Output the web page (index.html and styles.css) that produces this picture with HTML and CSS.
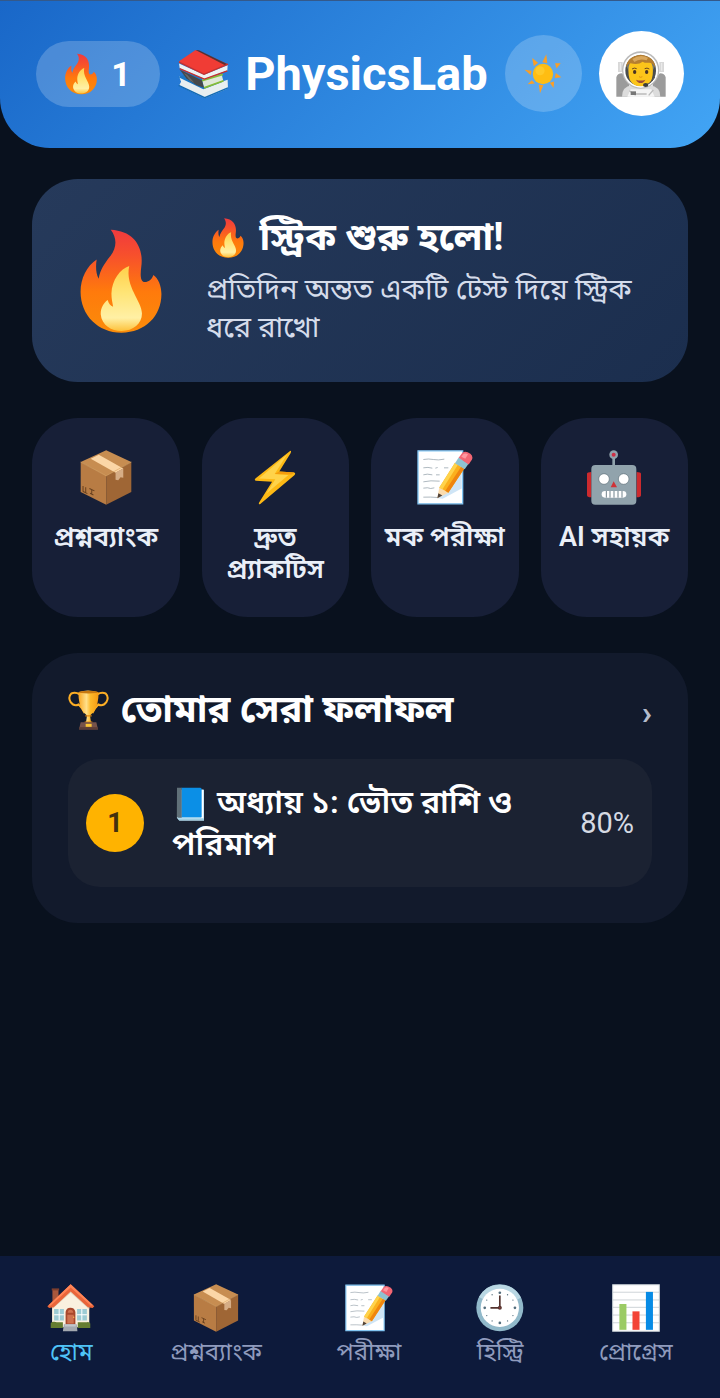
FILE: index.html
```
<!DOCTYPE html>
<html lang="bn">
<head>
    <meta charset="UTF-8">
    <meta name="viewport" content="width=device-width, initial-scale=1.0">
    <title>PhysicsLab</title>
    <link rel="stylesheet" href="styles.css">
</head>
<body>

<!-- Icon definitions -->
<svg class="sprite" aria-hidden="true">
    <defs>
        <linearGradient id="flame" x1="0" y1="0" x2="0" y2="1">
            <stop offset="0" stop-color="#f03a3e"/>
            <stop offset="0.25" stop-color="#f7502c"/>
            <stop offset="0.6" stop-color="#ff7a0c"/>
            <stop offset="1" stop-color="#fb8c0a"/>
        </linearGradient>
        <linearGradient id="flame-core" x1="0" y1="0" x2="0" y2="1">
            <stop offset="0" stop-color="#ffcf4a"/>
            <stop offset="0.4" stop-color="#ffe475"/>
            <stop offset="0.8" stop-color="#fff0a5"/>
            <stop offset="1" stop-color="#fdc23c"/>
        </linearGradient>
        <linearGradient id="gold" x1="0" y1="0" x2="1" y2="0">
            <stop offset="0" stop-color="#f9a51f"/>
            <stop offset="0.4" stop-color="#ffe08a"/>
            <stop offset="0.6" stop-color="#fdb92a"/>
            <stop offset="1" stop-color="#f59a12"/>
        </linearGradient>
    </defs>

    <symbol id="fire" viewBox="152 158 243 310">
        <path fill="url(#flame)" d="M243 160C262 185 262 213 240 241C224 262 211 280 207 306C198 290 198 268 201 249C172 268 153 305 153 345C153 415 205 467 275 467C345 467 394 418 394 352C394 328 385 305 370 295C366 308 355 316 345 316C330 316 331 293 334 270C341 218 318 164 243 160Z"/>
        <path fill="url(#flame-core)" d="M298 268C272 276 246 310 245 350C245 366 248 376 250 390C242 388 236 380 234 370C222 378 213 393 213 412C216 445 245 462 275 462C310 462 336 440 336 410C336 372 285 330 298 268Z"/>
    </symbol>

    <symbol id="books" viewBox="532 148 154 146">
        <path fill="#e8eef0" d="M538 228L612 262L682 238L683 264L614 293L538 256L544 244Z"/>
        <path fill="#1976c5" d="M535 230L610 266L668 244L640 226L560 222Z"/>
        <path fill="none" stroke="#126ab4" stroke-width="4" d="M537 255L614 291L683 262"/>
        <path fill="#dfe8d8" d="M606 238L664 222L669 240L612 262Z"/>
        <path fill="none" stroke="#86bd36" stroke-width="5" d="M668 222L606 241M670 241L612 262"/>
        <path fill="#46494b" d="M540 208L606 240L612 262L590 254L560 234Z"/>
        <path fill="#66696a" d="M552 218L562 223L584 248L570 240Z"/>
        <path fill="#f03c35" d="M537 184L587 150L683 192L612 222Z"/>
        <path fill="#5a3031" d="M587 150L597 151L682 192L676 196Z"/>
        <path fill="#eef2f2" d="M538 190L612 223L682 195L681 211L613 236L540 204Z"/>
        <path fill="none" stroke="#c9302c" stroke-width="4" d="M538 186L612 222L683 192M540 205L613 236L681 212"/>
    </symbol>

    <symbol id="sun" viewBox="489 156 114 122">
        <g fill="#fb9f26">
            <path d="M556 157L559 184L544 181Z"/>
            <path d="M583 184L600 184L587 200Z"/>
            <path d="M585 214L602 227L582 229Z"/>
            <path d="M567 244L580 240L578 260Z"/>
            <path d="M533 249L547 251L537 276Z"/>
            <path d="M512 236L521 246L499 248Z"/>
            <path d="M490 204L511 207L508 220Z"/>
            <path d="M513 168L531 183L518 193Z"/>
        </g>
        <circle cx="546" cy="217" r="31" fill="#ffbd12"/>
        <circle cx="537" cy="207" r="14" fill="#ffc928"/>
    </symbol>

    <symbol id="astronaut" viewBox="78 70 150 141">
        <path fill="#9b9b9b" d="M79 152Q82 140 96 140L118 160V210H79ZM227 152Q224 140 210 140L188 160V210H227Z"/>
        <path fill="#d8d8d8" d="M84 106H98V136H84ZM208 106H222V136H208Z"/>
        <path fill="none" stroke="#eee" stroke-width="3" d="M91 109V132M215 109V132"/>
        <path fill="#dcdcdc" d="M96 210Q96 180 125 176H180Q211 180 211 210Z"/>
        <path fill="#f5f5f5" d="M112 210L122 188H184L194 210Z"/>
        <path fill="none" stroke="#bbb" stroke-width="4" d="M118 192L137 206M190 190L176 206M138 202H170"/>
        <path fill="#777" d="M122 194H138V205H122Z"/>
        <circle cx="152" cy="130" r="56" fill="#b9b9b9"/>
        <circle cx="152" cy="131" r="52" fill="#fff"/>
        <circle cx="152" cy="132" r="46" fill="#4a4d4d"/>
        <path fill="#6f7470" d="M109 118Q116 90 152 86Q190 90 196 118L180 146H122Z"/>
        <path fill="#fcc51a" d="M116 120Q118 96 152 96Q186 96 188 120Q194 178 152 179Q110 178 116 120Z"/>
        <path fill="#b57e30" d="M108 122Q111 89 152 84Q193 89 196 122Q188 108 178 108Q166 110 158 105Q145 116 122 110Q112 112 108 122Z"/>
        <path fill="#d9a75c" d="M127 97Q150 82 174 93L170 101Q148 94 133 106Z"/>
        <ellipse cx="134" cy="136" rx="5" ry="6" fill="#4a3424"/>
        <ellipse cx="170" cy="136" rx="5" ry="6" fill="#4a3424"/>
        <path fill="none" stroke="#6a471f" stroke-width="3" d="M126 127Q133 122 140 126M164 126Q171 122 178 127"/>
        <path fill="none" stroke="#df9413" stroke-width="3" d="M147 150Q152 154 157 150"/>
        <path fill="#a04c37" d="M138 159Q152 164 166 159Q161 169 152 169Q143 169 138 159Z"/>
        <path fill="none" stroke="#555" stroke-width="3" d="M194 151Q188 167 168 175"/>
        <ellipse cx="167" cy="175" rx="8" ry="6" fill="#3c3c3c"/>
    </symbol>

    <symbol id="box" viewBox="163 119 153 164">
        <path fill="#c78d51" d="M164 155L240 120L315 155L240 197Z"/>
        <path fill="#b87c44" d="M164 155L240 196V282L164 244Z"/>
        <path fill="#9f6635" d="M240 196L315 155V244L240 282Z"/>
        <path fill="#fbd6a6" d="M194 145L218 133L291 174L268 187Z"/>
        <path fill="#d6ad86" d="M268 186L291 174V202L283 200L276 209L268 208Z"/>
        <path fill="none" stroke="#d9a668" stroke-width="2" d="M164 155L240 196L315 155"/>
        <path fill="none" stroke="#67401f" stroke-width="3" d="M171 226V241M179 230V245M170 242L184 249M190 234L205 241M197 237V252M192 248L202 253"/>
    </symbol>

    <symbol id="bolt" viewBox="685 118 128 168">
        <path fill="#fdb915" d="M795 121Q800 119 797 127L762 184L808 187Q813 189 809 194L704 283Q698 286 700 279L740 215L690 212Q685 210 689 205Z"/>
        <path fill="#ffd34a" d="M786 132L700 205L750 207L722 252L790 194L748 191Z"/>
        <path fill="#f49c0d" d="M748 191L762 184L808 187L800 193Z"/>
    </symbol>

    <symbol id="memo" viewBox="170 120 168 164">
        <path fill="#fff" stroke="#82c5f2" stroke-width="4" d="M173 122H307V281H173Z"/>
        <path fill="#cfe5f6" d="M304 188V235L247 266L232 264Z"/>
        <path fill="none" stroke="#8796a0" stroke-width="2" d="M189 148Q205 145 219 148T252 147M189 173Q203 170 216 174M225 174L232 172M251 173H264M189 194L201 192L216 194M227 194H238M189 215Q210 210 238 213M189 234Q203 231 211 235L222 233M189 261Q211 260 232 262"/>
        <path fill="#fbdcae" d="M231 264L237 231L264 248Z"/>
        <path fill="#514238" d="M231 264L234 249L246 256Z"/>
        <path fill="#fbb01d" d="M237 232L284 158L312 175L264 248Z"/>
        <path fill="#ffd34b" d="M237 232L284 158L293 163L246 238Z"/>
        <path fill="#ef850f" d="M255 242L303 169L312 175L264 248Z"/>
        <path fill="#8fc2d1" d="M284 159L295 142L325 160L313 177Z"/>
        <path fill="#f36673" d="M295 143L306 128Q316 121 330 131Q339 138 335 148L325 163Z"/>
        <path fill="#ff97a0" d="M303 140L310 131Q316 128 323 132L315 146Z"/>
    </symbol>

    <symbol id="robot" viewBox="683 119 164 165">
        <path fill="#91a3ac" d="M760 143H768V166H760Z"/>
        <circle cx="764" cy="133" r="13" fill="#91a3ac"/>
        <circle cx="764" cy="133" r="6" fill="#cf3045"/>
        <path fill="#cc2a2e" d="M684 190Q684 185 697 185V261Q684 261 684 255ZM846 190Q846 185 833 185V261Q846 261 846 255Z"/>
        <rect x="697" y="164" width="135" height="119" rx="12" fill="#91a3ac"/>
        <circle cx="735" cy="206" r="16" fill="#fff" stroke="#5f717a" stroke-width="2"/>
        <circle cx="794" cy="206" r="16" fill="#fff" stroke="#5f717a" stroke-width="2"/>
        <path fill="#cf3237" d="M764 213L774 231H755Z"/>
        <rect x="728" y="242" width="74" height="20" rx="10" fill="#fff"/>
        <path stroke="#71838c" stroke-width="3" d="M742 242V262M753 242V262M765 242V262M777 242V262M789 242V262"/>
    </symbol>

    <symbol id="trophy" viewBox="131 134 123 119">
        <path fill="none" stroke="#fcae25" stroke-width="6" d="M166 147Q154 139 141 144Q130 155 139 170Q149 184 163 177Q173 186 181 203M219 147Q231 139 244 144Q255 155 246 170Q236 184 222 177Q212 186 204 203"/>
        <path fill="url(#gold)" d="M162 140Q190 130 223 140Q222 180 210 196Q202 206 197 210L200 231H185L188 210Q181 205 174 195Q163 178 162 140Z"/>
        <ellipse cx="192" cy="140" rx="29" ry="4" fill="#c77810"/>
        <path fill="none" stroke="#e08611" stroke-width="4" d="M183 211H202M181 230H204"/>
        <path fill="#76534a" d="M169 230H216L221 252H164Z"/>
        <path fill="#5b3d37" d="M164 245H221V252H164Z"/>
        <path fill="#fbc635" d="M184 235H202V244H184Z"/>
    </symbol>

    <symbol id="book" viewBox="454 414 85 102">
        <path fill="#424b50" d="M456 418H470V512H460L455 505Z"/>
        <path fill="#b7dff2" d="M468 422H537V515H463L456 507Z"/>
        <path fill="#fff" d="M528 422H535V507H528Z"/>
        <path fill="#0b8fe6" d="M469 416H526Q530 416 530 421V505H469Z"/>
        <path fill="#607078" d="M456 416H470V506H460Q456 506 456 502Z"/>
        <path fill="none" stroke="#8bbcd2" stroke-width="2" d="M460 511H537"/>
    </symbol>

    <symbol id="house" viewBox="145 121 142 142">
        <path fill="#a8573c" d="M161 136H179V164L161 178Z"/>
        <path fill="#7d3e2d" d="M159 134H181V140H159Z"/>
        <path fill="#faf1df" d="M215 139L270 189V249H160V189Z"/>
        <path fill="#e0d0b7" d="M215 138L270 187V196L215 147L160 196V187Z"/>
        <path fill="#e9653a" d="M215 122L285 187L280 192L266 190L215 143L165 190L151 192L146 187Z"/>
        <path fill="#ff8557" d="M215 122L281 184L275 185L215 131L155 185L150 184Z"/>
        <path fill="#9ccbd4" d="M166 195H195V229H166ZM234 195H263V229H234Z"/>
        <path stroke="#fff" stroke-width="3" d="M181 195V229M166 212H195M248 195V229M234 212H263"/>
        <path fill="#a9482c" d="M200 243V204Q202 191 214 191Q227 191 229 204V243Z"/>
        <path fill="#cf7250" d="M205 212H224V238H205ZM206 206Q207 197 214 197Q222 197 223 206Z"/>
        <circle cx="224" cy="219" r="2" fill="#ffce57"/>
        <path fill="#657d31" d="M156 237Q160 231 174 234H192V251H156ZM236 234H263Q270 232 273 238V251H236Z"/>
        <path fill="#a4a9b0" d="M195 240H233L235 261H192Z"/>
        <path fill="#c3c7cb" d="M198 240H230V247H197Z"/>
    </symbol>

    <symbol id="clock" viewBox="350 131 143 143">
        <circle cx="421" cy="202" r="70" fill="#91b9ca"/>
        <path fill="#b9d7e3" d="M359 170Q380 132 421 133Q465 134 484 171L473 178Q454 147 421 146Q389 147 370 176Z"/>
        <circle cx="421" cy="202" r="57" fill="#fff"/>
        <g fill="#536d7c">
            <circle cx="421" cy="157" r="4"/>
            <circle cx="466" cy="202" r="4"/>
            <circle cx="421" cy="247" r="4"/>
            <circle cx="376" cy="202" r="4"/>
            <circle cx="444" cy="163" r="2"/>
            <circle cx="460" cy="179" r="2"/>
            <circle cx="460" cy="225" r="2"/>
            <circle cx="444" cy="241" r="2"/>
            <circle cx="398" cy="241" r="2"/>
            <circle cx="382" cy="225" r="2"/>
            <circle cx="382" cy="179" r="2"/>
            <circle cx="398" cy="163" r="2"/>
        </g>
        <path fill="none" stroke="#54342f" stroke-width="5" d="M421 165V202H393"/>
        <circle cx="421" cy="202" r="6" fill="#54342f"/>
        <circle cx="421" cy="202" r="2" fill="#c63c3c"/>
    </symbol>

    <symbol id="chart" viewBox="758 131 143 142">
        <path fill="#fff" stroke="#cbd3d8" stroke-width="3" d="M760 133H899V271H760Z"/>
        <path stroke="#b5bfc5" stroke-width="2" d="M760 155H899M760 178H899M760 200H899M760 223H899M760 246H899"/>
        <path fill="#9bcb64" d="M780 190H801V267H780Z"/>
        <path fill="#f34336" d="M819 212H840V267H819Z"/>
        <path fill="#078be5" d="M859 154H880V267H859Z"/>
    </symbol>
</svg>

<header class="topbar">
    <div class="streak-pill">
        <svg class="pill-icon"><use href="#fire"/></svg>
        <span>1</span>
    </div>
    <h1 class="brand">
        <svg class="brand-icon"><use href="#books"/></svg>
        <span>PhysicsLab</span>
    </h1>
    <button class="theme-btn" type="button" aria-label="থিম">
        <svg class="sun-icon"><use href="#sun"/></svg>
    </button>
    <button class="avatar" type="button" aria-label="প্রোফাইল">
        <svg class="avatar-icon"><use href="#astronaut"/></svg>
    </button>
</header>

<main>
    <section class="streak-card">
        <svg class="streak-icon"><use href="#fire"/></svg>
        <div class="streak-text">
            <h2><svg class="title-fire"><use href="#fire"/></svg> স্ট্রিক শুরু হলো!</h2>
            <p>প্রতিদিন অন্তত একটি টেস্ট দিয়ে স্ট্রিক ধরে রাখো</p>
        </div>
    </section>

    <div class="actions">
        <a class="action" href="#bank">
            <svg><use href="#box"/></svg>
            <span>প্রশ্নব্যাংক</span>
        </a>
        <a class="action" href="#practice">
            <svg><use href="#bolt"/></svg>
            <span>দ্রুত প্র্যাকটিস</span>
        </a>
        <a class="action" href="#mock">
            <svg><use href="#memo"/></svg>
            <span>মক পরীক্ষা</span>
        </a>
        <a class="action" href="#ai">
            <svg><use href="#robot"/></svg>
            <span>AI সহায়ক</span>
        </a>
    </div>

    <section class="results">
        <div class="results-head">
            <h2><svg class="title-trophy"><use href="#trophy"/></svg> তোমার সেরা ফলাফল</h2>
            <a class="more" href="#results">›</a>
        </div>
        <div class="result">
            <span class="rank">1</span>
            <h3><svg class="title-book"><use href="#book"/></svg> অধ্যায় ১: ভৌত রাশি ও পরিমাপ</h3>
            <span class="score">80%</span>
        </div>
    </section>
</main>

<nav class="bottom-nav">
    <a class="active" href="#home"><svg><use href="#house"/></svg>হোম</a>
    <a href="#bank"><svg><use href="#box"/></svg>প্রশ্নব্যাংক</a>
    <a href="#exam"><svg><use href="#memo"/></svg>পরীক্ষা</a>
    <a href="#history"><svg><use href="#clock"/></svg>হিস্ট্রি</a>
    <a href="#progress"><svg><use href="#chart"/></svg>প্রোগ্রেস</a>
</nav>

</body>
</html>
```
FILE: styles.css
```
* {
    box-sizing: border-box;
}
body {
    margin: 0;
    min-height: 100vh;
    display: flex;
    flex-direction: column;
    font-family: Roboto, "Noto Sans Bengali", "Noto Sans", sans-serif;
    color: #fff;
    background-color: #09111e;
}
h1, h2, h3, p {
    margin: 0;
}
a {
    color: inherit;
    text-decoration: none;
}
button {
    border: none;
    padding: 0;
    cursor: pointer;
}
.sprite {
    position: absolute;
    width: 0;
    height: 0;
}

/* Header */
.topbar {
    display: flex;
    align-items: center;
    justify-content: space-between;
    padding: 30px 36px 32px;
    border-top: 1px solid #34598a;
    border-radius: 0 0 50px 50px;
    background: linear-gradient(135deg, #1967c8, #42a5f5);
}
.streak-pill {
    display: flex;
    align-items: center;
    justify-content: center;
    gap: 14px;
    width: 124px;
    height: 66px;
    border-radius: 33px;
    background-color: rgba(255, 255, 255, 0.2);
    font-size: 34px;
    font-weight: bold;
}
.pill-icon {
    width: 32px;
    height: 42px;
}
.brand {
    display: flex;
    align-items: center;
    gap: 16px;
    font-size: 47px;
    line-height: 54px;
}
.brand-icon {
    width: 52px;
    height: 50px;
}
.theme-btn, .avatar {
    display: flex;
    align-items: center;
    justify-content: center;
    border-radius: 50%;
}
.theme-btn {
    width: 77px;
    height: 77px;
    background-color: rgba(255, 255, 255, 0.2);
}
.sun-icon {
    width: 38px;
    height: 40px;
}
.avatar {
    width: 85px;
    height: 85px;
    background-color: #fff;
}
.avatar-icon {
    width: 50px;
    height: 47px;
}

main {
    display: flex;
    flex-direction: column;
    gap: 36px;
    padding: 31px 32px;
}

/* Streak card */
.streak-card {
    display: flex;
    align-items: center;
    gap: 44px;
    padding: 36px 48px;
    border-radius: 46px;
    background: linear-gradient(135deg, #263a5b, #1b2e4e);
}
.streak-icon {
    flex: none;
    width: 82px;
    height: 104px;
}
.streak-text h2 {
    margin-bottom: 11px;
    font-size: 38px;
    line-height: 44px;
}
.streak-text p {
    font-size: 29px;
    line-height: 38px;
    color: #d5dceb;
}
h2 svg, h3 svg {
    vertical-align: -8px;
}
.title-fire {
    width: 32px;
    height: 40px;
    margin: 0 6px;
}

/* Quick actions */
.actions {
    display: grid;
    grid-template-columns: repeat(4, 1fr);
    gap: 22px;
}
.action {
    display: flex;
    flex-direction: column;
    align-items: center;
    gap: 16px;
    padding: 32px 10px;
    border-radius: 46px;
    background-color: #171f37;
    color: #eaeff8;
    font-size: 27px;
    font-weight: 600;
    line-height: 32px;
    text-align: center;
}
.action svg {
    width: 56px;
    height: 55px;
}

/* Best results */
.results {
    padding: 32px 36px 36px;
    border-radius: 46px;
    background-color: #121a2c;
}
.results-head {
    display: flex;
    align-items: center;
    justify-content: space-between;
    margin-bottom: 26px;
}
.results-head h2 {
    font-size: 38px;
    line-height: 48px;
}
.title-trophy {
    width: 41px;
    height: 40px;
    margin-right: 2px;
}
.more {
    padding-top: 6px;
    font-size: 34px;
    font-weight: bold;
    color: #b4bccb;
}
.result {
    display: flex;
    align-items: center;
    padding: 22px 18px;
    border-radius: 32px;
    background-color: #1b2232;
}
.rank {
    flex: none;
    width: 58px;
    height: 58px;
    border-radius: 50%;
    background-color: #ffb300;
    color: #43300f;
    font-size: 27px;
    font-weight: bold;
    line-height: 58px;
    text-align: center;
}
.result h3 {
    flex: 1;
    margin: 0 28px;
    font-size: 32px;
    font-weight: 600;
    line-height: 42px;
}
.title-book {
    width: 29px;
    height: 34px;
    margin: 0 4px;
}
.score {
    font-size: 29px;
    color: #d5dae3;
}

/* Bottom navigation */
.bottom-nav {
    position: sticky;
    bottom: 0;
    display: flex;
    justify-content: space-around;
    margin-top: auto;
    padding: 28px 10px;
    background-color: #0d1a3b;
    color: #8f9bbd;
    font-size: 24px;
    line-height: 36px;
}
.bottom-nav a {
    display: flex;
    flex-direction: column;
    align-items: center;
    gap: 2px;
}
.bottom-nav svg {
    width: 48px;
    height: 48px;
}
.bottom-nav .active {
    color: #4fc3f7;
}
```
